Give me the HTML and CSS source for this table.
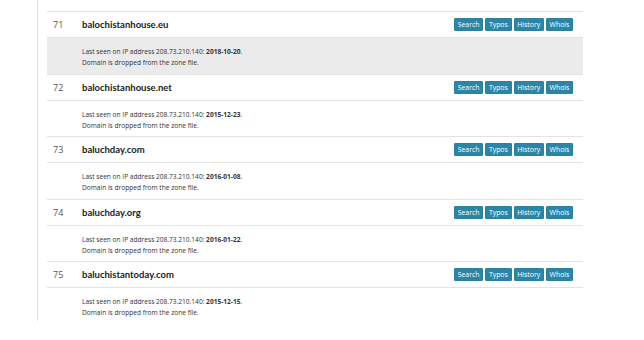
FILE: index.html
```html
<!DOCTYPE html>
<html>
<head>
<meta charset="utf-8">
<link rel="stylesheet" href="styles.css">
</head>
<body>
<div class="page">
  <div class="panel">
    <div class="list">
      <div class="entry">
        <div class="head">
          <span class="num">71</span>
          <span class="domain">balochistanhouse.eu</span>
          <span class="btns"><span class="btn">Search</span><span class="btn">Typos</span><span class="btn">History</span><span class="btn">Whois</span></span>
        </div>
        <div class="detail shaded">
          <div>Last seen on IP address 208.73.210.140: <b>2018-10-20</b>.</div>
          <div>Domain is dropped from the zone file.</div>
        </div>
      </div>
      <div class="entry">
        <div class="head">
          <span class="num">72</span>
          <span class="domain">balochistanhouse.net</span>
          <span class="btns"><span class="btn">Search</span><span class="btn">Typos</span><span class="btn">History</span><span class="btn">Whois</span></span>
        </div>
        <div class="detail">
          <div>Last seen on IP address 208.73.210.140: <b>2015-12-23</b>.</div>
          <div>Domain is dropped from the zone file.</div>
        </div>
      </div>
      <div class="entry">
        <div class="head">
          <span class="num">73</span>
          <span class="domain">baluchday.com</span>
          <span class="btns"><span class="btn">Search</span><span class="btn">Typos</span><span class="btn">History</span><span class="btn">Whois</span></span>
        </div>
        <div class="detail">
          <div>Last seen on IP address 208.73.210.140: <b>2016-01-08</b>.</div>
          <div>Domain is dropped from the zone file.</div>
        </div>
      </div>
      <div class="entry">
        <div class="head">
          <span class="num">74</span>
          <span class="domain">baluchday.org</span>
          <span class="btns"><span class="btn">Search</span><span class="btn">Typos</span><span class="btn">History</span><span class="btn">Whois</span></span>
        </div>
        <div class="detail">
          <div>Last seen on IP address 208.73.210.140: <b>2016-01-22</b>.</div>
          <div>Domain is dropped from the zone file.</div>
        </div>
      </div>
      <div class="entry">
        <div class="head">
          <span class="num">75</span>
          <span class="domain">baluchistantoday.com</span>
          <span class="btns"><span class="btn">Search</span><span class="btn">Typos</span><span class="btn">History</span><span class="btn">Whois</span></span>
        </div>
        <div class="detail last">
          <div>Last seen on IP address 208.73.210.140: <b>2015-12-15</b>.</div>
          <div>Domain is dropped from the zone file.</div>
        </div>
      </div>
    </div>
  </div>
</div>
</body>
</html>
```
FILE: styles.css
```css
html, body {
  margin: 0;
  padding: 0;
  background: #fff;
}
body {
  font-family: "Open Sans", "Noto Sans", sans-serif;
  color: #333;
}
.page {
  padding-left: 37px;
  width: 546px;
}
.panel {
  border-left: 1px solid #e3e3e3;
  padding: 11px 0 0 9px;
  height: 310px;
  overflow: hidden;
}
.list {
  width: 536px;
}
.head {
  display: flex;
  align-items: center;
  height: 25px;
  border-top: 1px solid #e4e4e4;
}
.num {
  width: 29px;
  padding-left: 6px;
  font-size: 9px;
  color: #555;
}
.domain {
  flex: 1;
  font-family: "Lato", "Open Sans", sans-serif;
  font-size: 9.5px;
  font-weight: 700;
  color: #222;
}
.btns {
  display: flex;
  gap: 2px;
  padding-right: 10px;
}
.btn {
  background: #2b85a7;
  border: 1px solid #2b80a1;
  border-radius: 1px;
  color: #fff;
  font-size: 6.9px;
  line-height: 11px;
  padding: 0 2.7px;
}
.detail {
  border-top: 1px solid #e4e4e4;
  box-sizing: border-box;
  height: 36.5px;
  padding-left: 35px;
  padding-top: 3px;
  display: flex;
  flex-direction: column;
  justify-content: center;
  font-size: 6.6px;
  line-height: 11px;
  color: #333;
}
.detail b {
  font-weight: 700;
}
.shaded {
  background: #ebebeb;
}
```
